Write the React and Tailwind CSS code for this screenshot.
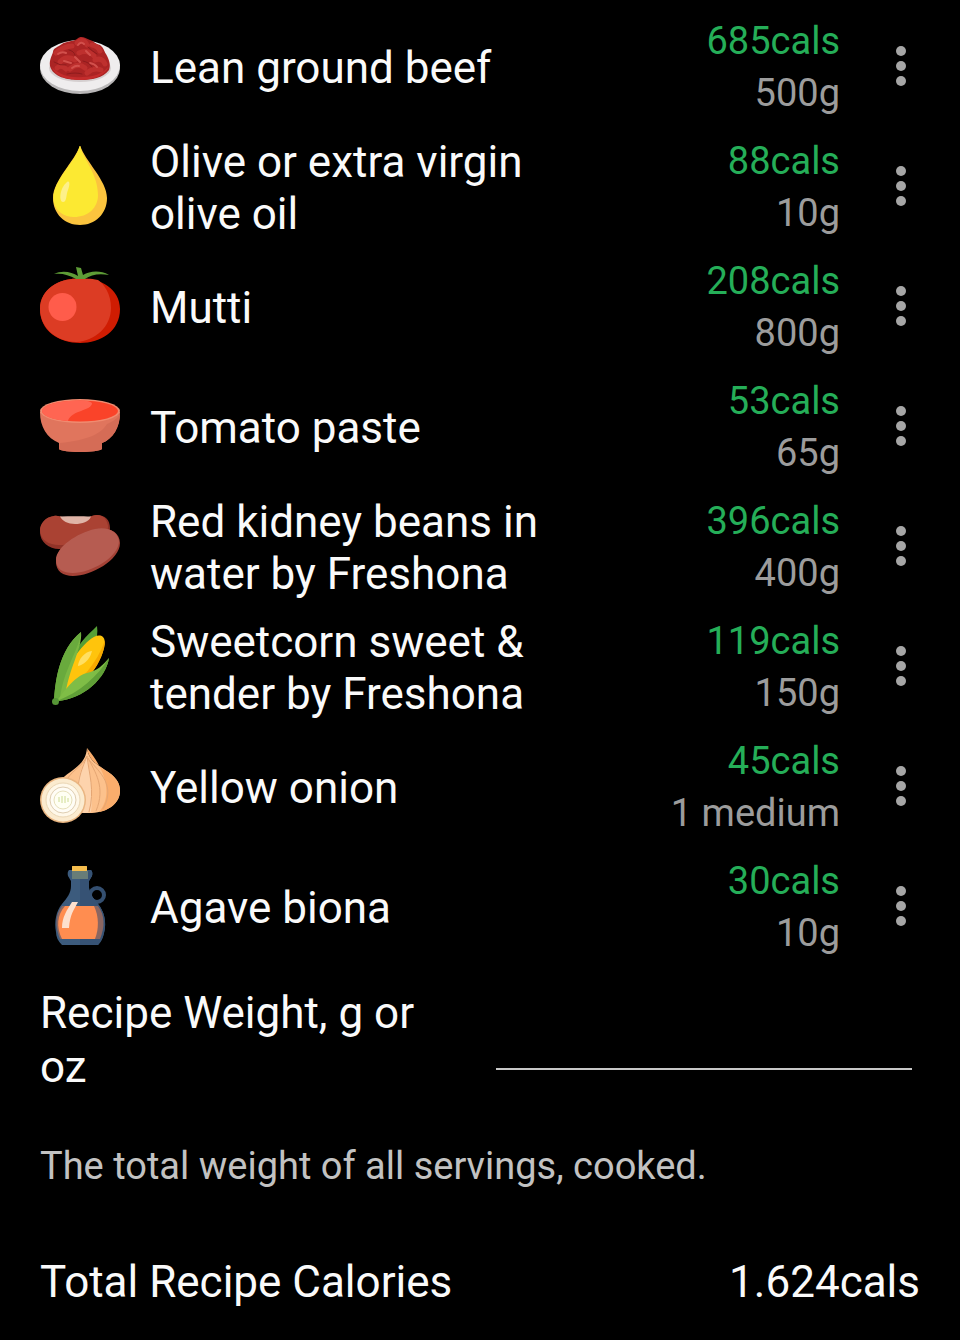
import { useState } from 'react';

const BeefIcon = () => (
  <svg className="w-20 h-20" viewBox="0 0 80 80" aria-hidden="true">
    <ellipse cx="40" cy="42" rx="40" ry="26" fill="#b9b7b8" />
    <ellipse cx="40" cy="39.5" rx="40" ry="25.5" fill="#efedee" />
    <ellipse cx="40" cy="42" rx="31" ry="14" fill="#d5cfd0" />
    <path d="M10 40C9 34 12 30 13 26C13 22 18 21 22 18C26 15 32 16 37 13C41 9 45 12 50 14C54 15 55 18 60 19C64 22 64 25 66 28C69 33 71 39 69 44C63 52 52 54 40 54C27 54 13 51 10 40Z" fill="#ab2424" />
    <path d="M12 41C20 50 32 52 42 51C52 51 63 48 68 41C67 47 57 54 40 54C25 54 14 49 12 41Z" fill="#c42c2c" />
    <g fill="none" strokeLinecap="round">
      <path d="M16 27Q24 20 32 20M37 17Q43 11 47 19M52 19Q58 20 60 25M20 36Q26 29 35 34M39 27Q47 23 54 30M55 34Q62 31 65 38M30 43Q38 36 45 42M47 47Q54 41 61 44M17 42Q21 38 26 43" stroke="#be302e" strokeWidth="5" />
      <path d="M18 28Q22 25 26 27M38 19Q41 15 44 18M24 35L31 37M35 31L40 36M50 37Q55 38 57 41M32 42Q36 39 39 40M46 25L50 29" stroke="#d2504c" strokeWidth="2" />
      <path d="M29 24Q34 25 35 29M48 21Q52 25 57 28M14 36Q20 40 26 39M43 35Q49 36 52 41M27 48Q36 46 42 48" stroke="#8d1b1c" strokeWidth="1" />
    </g>
  </svg>
);

const OilIcon = () => (
  <svg className="w-20 h-20" viewBox="0 0 80 80" aria-hidden="true">
    <path d="M40 -1C44 14 67 34 67 52C67 68 55 79 40 79C25 79 13 68 13 52C13 34 36 14 40 -1Z" fill="#fbc43e" />
    <path d="M40 -1C42 12 58 27 58 49C58 62 48 71 34 71C24 71 16 65 14 57C9 37 36 17 40 -1Z" fill="#fce932" />
    <path d="M27 36C30 34 30 39 28 44C26 48 27 56 23 56C19 56 19 43 27 36Z" fill="#fdf08a" />
  </svg>
);

const TomatoIcon = () => (
  <svg className="w-20 h-20" viewBox="0 0 80 80" aria-hidden="true">
    <path d="M40 13C25 11 0 20 0 43C0 65 19 77 40 77C61 77 80 65 80 43C80 20 55 11 40 13Z" fill="#cf1c02" />
    <path d="M40 13C25 11 0 20 0 43C0 62 17 76 36 76C56 75 71 60 71 42C71 28 64 18 58 14C50 12 45 13 40 13Z" fill="#dc3c24" />
    <circle cx="22.5" cy="41" r="14" fill="#ff5c4b" />
    <path d="M14 8C22 4 32 6 38 10L36 1L41 2L43 9C50 5 60 4 69 9C58 7 51 9 45 13H36C29 9 22 7 14 8Z" fill="#5e9c36" />
  </svg>
);

const BowlIcon = () => (
  <svg className="w-20 h-20" viewBox="0 0 80 80" aria-hidden="true">
    <path d="M0 26H80C80 41 73 53 62 57V63C58 67 22 67 19 63V57C7 52 0 41 0 26Z" fill="#e0755d" />
    <path d="M67 38C61 48 48 54 20 57L19 63C22 67 58 67 62 63V57C73 53 80 41 80 28C77 33 72 36 67 38Z" fill="#d56c56" />
    <ellipse cx="40" cy="25" rx="40" ry="12" fill="#f08b70" />
    <ellipse cx="40" cy="25" rx="38" ry="10.5" fill="#fa4329" />
    <path d="M2 25C2 19 19 14.5 40 14.5C46 14.5 49 15 52 17C52 25 31 24 28 35C13 34 2 30 2 25Z" fill="#ff6552" />
  </svg>
);

const BeansIcon = () => (
  <svg className="w-20 h-20" viewBox="0 0 80 80" aria-hidden="true">
    <path d="M14 10C5 11 0 18 0 26C0 36 9 43 19 43C35 43 70 38 70 22C70 14 65 9 57 9C51 9 47 14 35 14C25 14 21 9 14 10Z" fill="#923328" />
    <path d="M14 10C5 11 0 18 0 24C0 34 9 39 19 39C36 39 70 34 68 20C67 14 64 9 57 9C51 9 47 14 35 14C25 14 21 9 14 10Z" fill="#aa4233" />
    <path d="M20 10.5C30 10 42 10 51 10.5C49 16 42 18 35 18C28 18 22 15 20 10.5Z" fill="#dfb4a7" />
    <path d="M55 23C37 27 16 41 16 56C16 65 23 70 33 70C51 70 80 54 80 37C80 25 67 20 55 23Z" fill="#a44236" />
    <path d="M55 23C37 27 16 41 16 54C16 63 23 67 33 67C51 67 79 51 79 35C78 25 67 20 55 23Z" fill="#b65c51" />
  </svg>
);

const CornIcon = () => (
  <svg className="w-20 h-20" viewBox="0 0 80 80" aria-hidden="true">
    <path d="M57 0C59 13 53 26 40 39L33 35C36 18 47 10 57 0Z" fill="#569f36" />
    <path d="M63 11C67 15 64 26 57 39C49 52 39 61 27 65C22 56 27 39 39 25C47 15 57 6 63 11Z" fill="#ffc40c" />
    <path d="M65 14C65 25 59 38 51 48C43 57 34 62 27 65C40 55 57 38 65 14Z" fill="#f6a900" />
    <path d="M52 25C50 34 43 39 38 40C38 34 45 25 52 25Z" fill="#ffdf62" />
    <path d="M41 6C43 22 28 43 25 72L14 77C15 55 19 24 41 6Z" fill="#7ab843" />
    <path d="M41 6C40 22 22 46 20 74L14 77C15 55 19 24 41 6Z" fill="#69aa3d" />
    <path d="M69 32C66 52 44 73 17 75C25 63 37 49 47 47C57 45 63 39 69 32Z" fill="#7fbd46" />
    <path d="M69 32C66 52 44 73 17 75C40 66 57 51 69 32Z" fill="#609f37" />
    <circle cx="15.5" cy="75.5" r="3.5" fill="#569536" />
  </svg>
);

const OnionIcon = () => (
  <svg className="w-20 h-20" viewBox="0 0 80 80" aria-hidden="true">
    <path d="M47 2C49 15 57 18 65 24C75 30 80 36 80 45C80 59 65 67 49 67C31 67 17 58 17 45C17 34 25 30 33 24C41 18 46 13 47 2Z" fill="#fcc18c" />
    <path d="M47 2C49 15 57 18 65 24C75 30 80 36 80 45C80 57 68 65 59 66C72 51 68 27 47 2Z" fill="#faad6c" />
    <path d="M47 8C44 20 36 25 36 66Q45 68 51 66C54 42 49 23 47 8Z" fill="#fdd3ac" />
    <path d="M47 10C43 21 29 25 25 38M47 10C41 26 36 34 38 65M47 10C49 28 55 44 49 66M48 12C55 26 66 41 56 65M49 14C60 26 76 40 63 63" fill="none" stroke="#e5a673" strokeWidth="1" />
    <circle cx="23" cy="54" r="23" fill="#e9b581" />
    <circle cx="23" cy="54" r="21.5" fill="#fbebcf" />
    <circle cx="23" cy="54" r="17" fill="#fff8e9" stroke="#ead6b4" />
    <circle cx="23" cy="54" r="13" fill="#fffdf6" stroke="#dfceb2" />
    <circle cx="23" cy="54" r="9" fill="#fffff3" stroke="#e7e0ba" />
    <path d="M19 51V56M22 50V57M25 50V57M28 52V56" stroke="#cedc94" strokeWidth="1" />
  </svg>
);

const BottleIcon = () => (
  <svg className="w-20 h-20" viewBox="0 0 80 80" aria-hidden="true">
    <circle cx="57" cy="29" r="7" fill="none" stroke="#344f70" strokeWidth="4" />
    <path d="M29 4H51Q53 6 52 10L49 15V22C50 29 54 33 58 38C64 45 67 56 64 67C63 72 61 76 58 79H22C18 75 16 71 16 66C14 56 16 45 22 38C27 32 31 27 31 20V15L28 10Q27 6 29 4Z" fill="#3c5b7d" />
    <path d="M40 4H51Q53 6 52 10L49 15V22C50 29 54 33 58 38C64 45 67 56 64 67C63 72 61 76 58 79H40Z" fill="#365274" />
    <path d="M22 40H58C65 49 65 61 60 73H20C15 61 15 49 22 40Z" fill="#8b6661" />
    <path d="M25 40H54C59 50 59 63 55 73H22C16 61 17 49 25 40Z" fill="#ff8d50" />
    <path d="M32 5H48V13H32Z" fill="#687d78" />
    <path d="M32 1Q32 -1 34 -1H45Q47 -1 47 1V5H32Z" fill="#f5bd4d" />
    <path d="M32 36H38C34 44 30 48 29 62H22C22 51 27 44 32 36Z" fill="#fde0ce" />
  </svg>
);

const ingredients = [
  { name: 'Lean ground beef', calories: '685cals', amount: '500g', Icon: BeefIcon },
  { name: 'Olive or extra virgin olive oil', calories: '88cals', amount: '10g', Icon: OilIcon },
  { name: 'Mutti', calories: '208cals', amount: '800g', Icon: TomatoIcon },
  { name: 'Tomato paste', calories: '53cals', amount: '65g', Icon: BowlIcon },
  { name: 'Red kidney beans in water by Freshona', calories: '396cals', amount: '400g', Icon: BeansIcon },
  { name: 'Sweetcorn sweet & tender by Freshona', calories: '119cals', amount: '150g', Icon: CornIcon },
  { name: 'Yellow onion', calories: '45cals', amount: '1 medium', Icon: OnionIcon },
  { name: 'Agave biona', calories: '30cals', amount: '10g', Icon: BottleIcon },
];

const IngredientRow = ({ item }) => {
  const { Icon } = item;

  return (
    <li className="flex items-center h-30">
      <div className="shrink-0">
        <Icon />
      </div>
      <p className="flex-1 min-w-0 ml-[30px] pt-1 pr-32 text-[44px] leading-[52px]">{item.name}</p>
      <div className="shrink-0 pt-0.5 text-right text-[38px] leading-[52px]">
        <p className="text-[#25ae58]">{item.calories}</p>
        <p className="text-[#9c9c9c]">{item.amount}</p>
      </div>
      <button type="button" aria-label={`Options for ${item.name}`} className="shrink-0 ml-10 w-10 h-20 flex items-center justify-center">
        <svg className="w-3 h-10" viewBox="0 0 12 40" fill="#a6a6a6">
          <circle cx="7" cy="5" r="5" />
          <circle cx="7" cy="20" r="5" />
          <circle cx="7" cy="35" r="5" />
        </svg>
      </button>
    </li>
  );
};

const App = () => {
  const [weight, setWeight] = useState('');

  return (
    <main className="min-h-screen bg-black text-[#fafafa] font-['Roboto',sans-serif] px-10 pt-1.5 pb-7">
      <ul>
        {ingredients.map((item) => (
          <IngredientRow key={item.name} item={item} />
        ))}
      </ul>

      {/* Recipe weight */}
      <div className="flex items-end mt-5 gap-10">
        <label htmlFor="recipe-weight" className="flex-1 text-[44px] leading-[54px]">
          Recipe Weight, g or oz
        </label>
        <input
          id="recipe-weight"
          type="text"
          inputMode="decimal"
          value={weight}
          onChange={(e) => setWeight(e.target.value)}
          aria-describedby="recipe-weight-hint"
          className="flex-1 min-w-0 h-16 mr-2 mb-6 bg-transparent border-b-2 border-[#c8c8c8] text-[44px] text-right outline-none"
        />
      </div>
      <p id="recipe-weight-hint" className="mt-[46px] text-[38px] leading-[52px] text-[#c2c2c2]">
        The total weight of all servings, cooked.
      </p>

      {/* Total */}
      <div className="flex justify-between mt-16 text-[44px] leading-[52px]">
        <p>Total Recipe Calories</p>
        <p>1.624cals</p>
      </div>
    </main>
  );
};

export default App;
